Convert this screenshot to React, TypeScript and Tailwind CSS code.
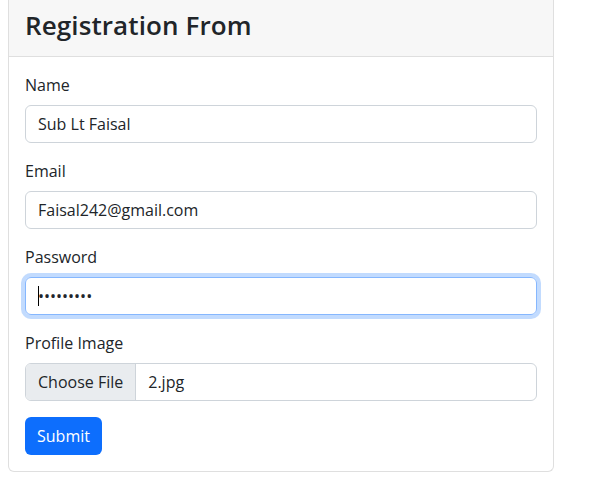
import React from 'react';

const App: React.FC = () => {
  return (
    <div className="w-[602px] h-[478px] bg-white text-[#212529] font-['Segoe_UI','Open_Sans',sans-serif] text-[16px] leading-6">
      <div className="ml-2 w-[546px] border border-t-0 border-[#dfdfdf] rounded-b-[6px] overflow-hidden">
        <div className="h-[57px] bg-[#f7f7f7] border-b border-[#dfdfdf] px-4 pt-[5px]">
          <h3 className="text-[26px] leading-[40px] font-semibold tracking-[0.1px]">Registration From</h3>
        </div>
        <div className="p-4">
          <div className="mb-4">
            <label className="block mb-2">Name</label>
            <input
              readOnly
              value="Sub Lt Faisal"
              className="block w-full h-[38px] px-3 border border-[#ced4da] rounded-[6px] outline-none"
            />
          </div>
          <div className="mb-4">
            <label className="block mb-2">Email</label>
            <input
              readOnly
              value="Faisal242@gmail.com"
              className="block w-full h-[38px] px-3 border border-[#ced4da] rounded-[6px] outline-none"
            />
          </div>
          <div className="mb-4">
            <label className="block mb-2">Password</label>
            <div className="relative">
              <input
                readOnly
                type="password"
                value="123456789"
                className="block w-full h-[38px] px-3 border border-[#86b7fe] rounded-[6px] outline-none shadow-[0_0_0_4px_rgba(13,110,253,0.25)]"
              />
              <span className="absolute left-[13px] top-[9px] w-px h-[20px] bg-black" />
            </div>
          </div>
          <div className="mb-4">
            <label className="block mb-2">Profile Image</label>
            <div className="flex h-[38px] border border-[#ced4da] rounded-[6px] overflow-hidden">
              <div className="flex items-center px-3 bg-[#e9ecef] border-r border-[#ced4da]">Choose File</div>
              <div className="flex items-center px-3">2.jpg</div>
            </div>
          </div>
          <button className="h-[38px] px-3 bg-[#0d6efd] text-white rounded-[6px]">Submit</button>
        </div>
      </div>
    </div>
  );
};

export default App;
